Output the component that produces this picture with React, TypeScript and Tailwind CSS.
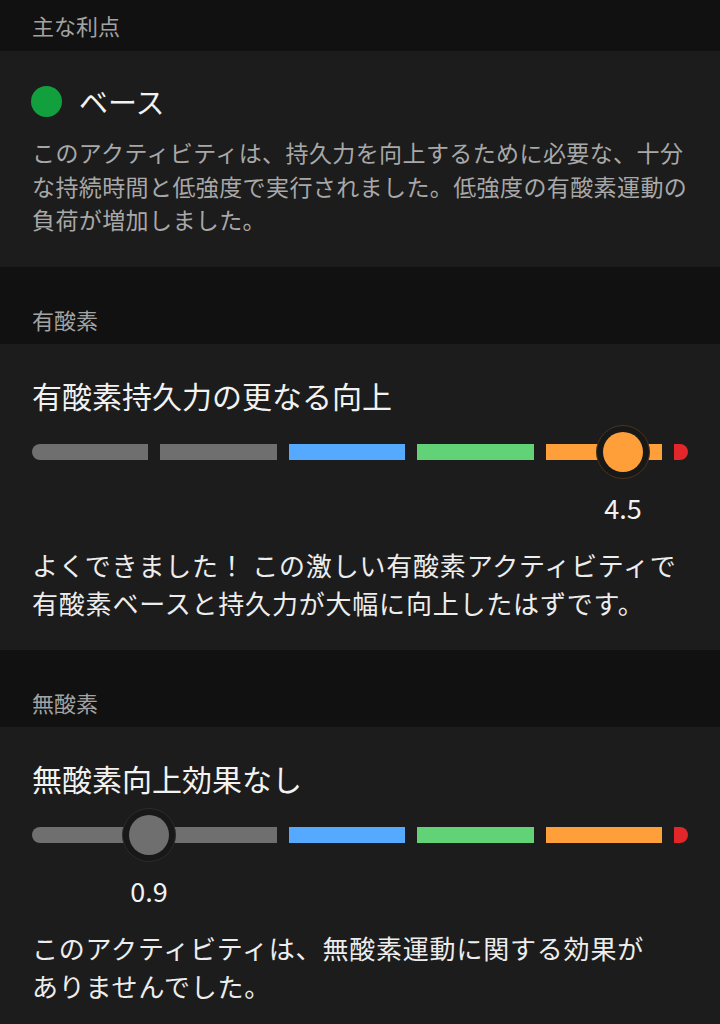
import React from 'react';

type Effect = {
  header: string;
  title: string;
  value: string;
  thumbX: number; // centre of the thumb, px from the bar's left edge
  thumb: 'orange' | 'gray';
  text: string[];
};

const effects: Effect[] = [
  {
    header: '有酸素',
    title: '有酸素持久力の更なる向上',
    value: '4.5',
    thumbX: 591,
    thumb: 'orange',
    text: ['よくできました！ この激しい有酸素アクティビティで', '有酸素ベースと持久力が大幅に向上したはずです。'],
  },
  {
    header: '無酸素',
    title: '無酸素向上効果なし',
    value: '0.9',
    thumbX: 117,
    thumb: 'gray',
    text: ['このアクティビティは、無酸素運動に関する効果が', 'ありませんでした。'],
  },
];

const SectionHeader = ({ label, tall }: { label: string; tall?: boolean }) => (
  <div
    className={
      'flex items-end px-8 text-[22px] leading-[30px] text-[#a3a3a3] ' +
      (tall ? 'h-[77px] pb-[10px]' : 'h-[51px] pb-[11px]')
    }
  >
    {label}
  </div>
);

const EffectBar = ({ thumbX, thumb }: { thumbX: number; thumb: 'orange' | 'gray' }) => (
  <div className="relative flex h-[56px] items-center">
    <div className="flex h-[16px] w-full gap-[12px]">
      <div className="h-full w-[117px] rounded-l-full bg-[#6f6f6f]" />
      <div className="h-full w-[117px] bg-[#6f6f6f]" />
      <div className="h-full w-[117px] bg-[#55aaff]" />
      <div className="h-full w-[117px] bg-[#62d276]" />
      <div className="h-full w-[117px] bg-[#ff9f3a]" />
      <div className="h-full w-[14px] rounded-r-full bg-[#e2272a]" />
    </div>
    {/* thumb */}
    <div
      className={
        'absolute top-px flex h-[54px] w-[54px] items-center justify-center rounded-full border bg-[#181818] ' +
        (thumb === 'orange' ? 'border-[#4a3418]' : 'border-[#2c2c2c]')
      }
      style={{ left: thumbX - 27 }}
    >
      <div
        className={
          'h-[40px] w-[40px] rounded-full ' + (thumb === 'orange' ? 'bg-[#ff9f3a]' : 'bg-[#6f6f6f]')
        }
      />
    </div>
  </div>
);

const EffectCard = ({ e }: { e: Effect }) => (
  <div className="bg-[#1c1c1c] px-8 pt-[32px] pb-[28px]">
    <div className="text-[30px] leading-[38px] text-[#f2f2f2]">{e.title}</div>
    <div className="mt-[10px]">
      <EffectBar thumbX={e.thumbX} thumb={e.thumb} />
    </div>
    <div className="mt-[12px] h-[32px]" style={{ paddingLeft: e.thumbX - 40 }}>
      <div className="w-[80px] text-center text-[27px] leading-[32px] text-[#f2f2f2]">{e.value}</div>
    </div>
    <div className="mt-[22px] whitespace-nowrap text-[26px] leading-[38px] tracking-[0.8px] text-[#ededed]">
      {e.text.map((line) => (
        <div key={line}>{line}</div>
      ))}
    </div>
  </div>
);

export default function App() {
  return (
    <div className="min-h-screen bg-[#111111] font-['Noto_Sans_CJK_JP',sans-serif]">
      <SectionHeader label="主な利点" />
      <div className="bg-[#1c1c1c] px-8 pt-[32px] pb-[30px]">
        <div className="flex items-center gap-[17px]">
          <div className="h-[31px] w-[31px] -ml-px rounded-full bg-[#12a03f]" />
          <div className="text-[29px] leading-[36px] text-[#f2f2f2]">ベース</div>
        </div>
        <div className="mt-[17px] whitespace-nowrap text-[23px] leading-[33.5px] tracking-[0.4px] text-[#a8a8a8]">
          <div>このアクティビティは、持久力を向上するために必要な、十分</div>
          <div>な持続時間と低強度で実行されました。低強度の有酸素運動の</div>
          <div>負荷が増加しました。</div>
        </div>
      </div>
      {effects.map((e) => (
        <div key={e.header}>
          <SectionHeader label={e.header} tall />
          <EffectCard e={e} />
        </div>
      ))}
    </div>
  );
}
